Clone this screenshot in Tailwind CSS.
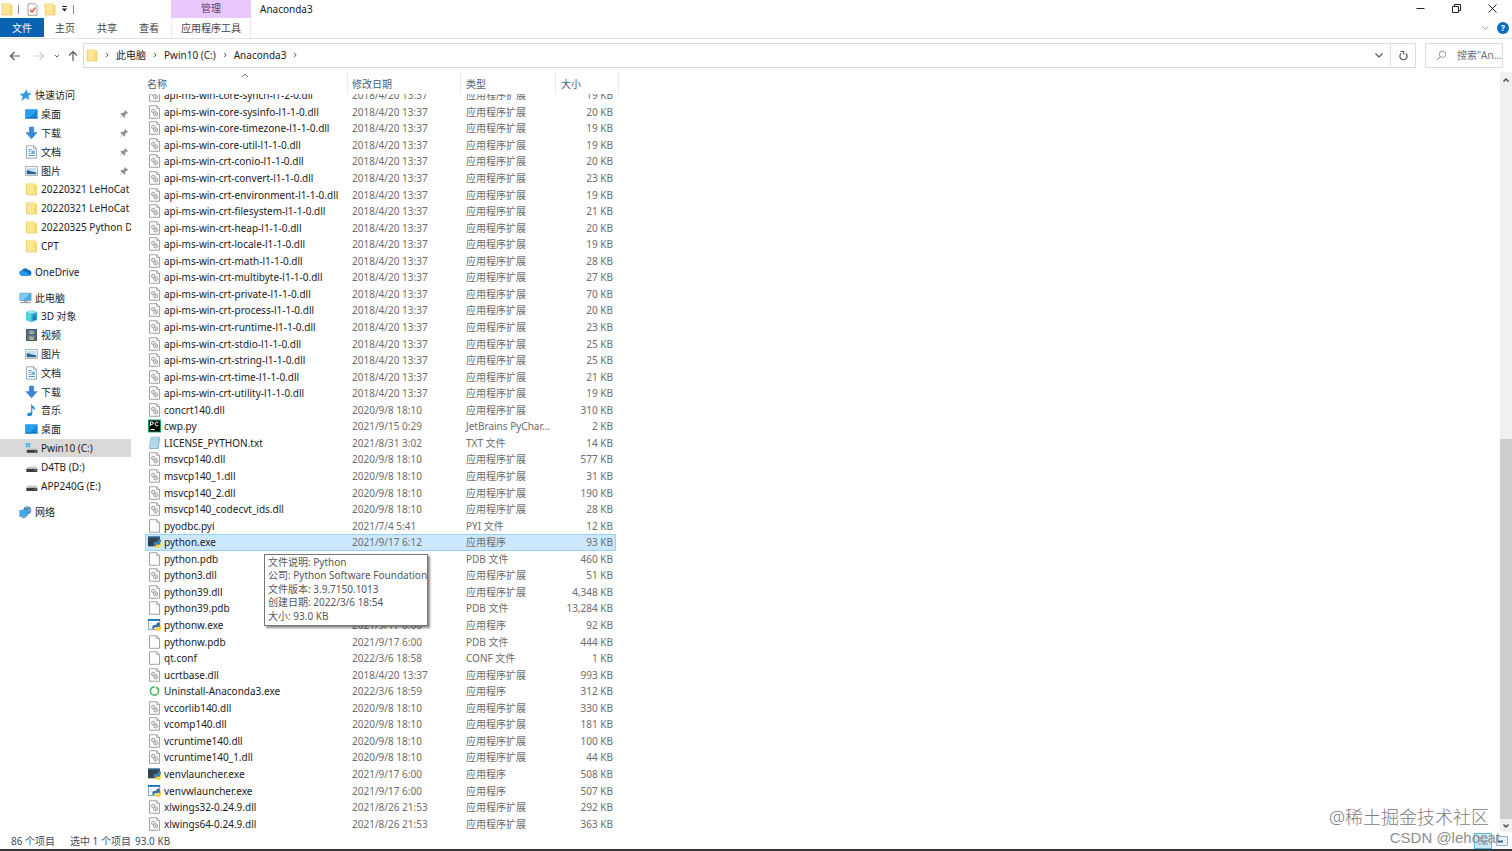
<!DOCTYPE html>
<html lang="zh-CN">

<head>
    <meta charset="UTF-8">
    <meta name="viewport" content="width=device-width, initial-scale=1.0">
    <title>Anaconda3</title>
    <script src="https://cdn.jsdelivr.net/npm/@tailwindcss/browser@4"></script>
</head>

<body class="relative flex h-screen flex-col overflow-hidden bg-white font-['Noto_Sans','Noto_Sans_CJK_SC',sans-serif] text-[10px] leading-4 text-[#1c1c1c]">

    <!-- Icon set -->
    <svg class="hidden">
        <symbol id="folder" viewBox="0 0 12 14">
            <path d="M1 1.5h8.5v1.2H11a.6.6 0 0 1 .6.6V13H1z" fill="#f5d978" />
            <path d="M1 1.5h7.6v11.5H1z" fill="#fde596" />
            <path d="M1 13V1.5M1 13h10.6" stroke="#e8c765" stroke-width=".7" fill="none" />
        </symbol>
        <symbol id="dll" viewBox="0 0 12 14">
            <path d="M1 .7h7.300l2.700 2.700v9.900H1z" fill="#fbfbfb" stroke="#8d8d8d" stroke-width=".8" />
            <path d="M8.200.8v2.800H11" fill="none" stroke="#8d8d8d" stroke-width=".7" />
            <circle cx="4.800" cy="6" r="1.800" fill="#e3e6e8" stroke="#9aa3a9" stroke-width=".9" />
            <circle cx="7.200" cy="8.900" r="2.100" fill="#e3e6e8" stroke="#9aa3a9" stroke-width=".9" />
            <circle cx="7.200" cy="8.900" r=".6" fill="#7f8a91" />
        </symbol>
        <symbol id="file" viewBox="0 0 12 14">
            <path d="M1 .7h7.300l2.700 2.700v9.900H1z" fill="#fefefe" stroke="#8d8d8d" stroke-width=".8" />
            <path d="M8.200.8v2.800H11" fill="none" stroke="#8d8d8d" stroke-width=".7" />
        </symbol>
        <symbol id="txt" viewBox="0 0 12 14">
            <path d="M3 1.500h8.700l-1.600 11.500H1z" fill="#8fc4d8" />
            <path d="M2.500 1h8.300L9.400 12.500H.6z" fill="#b5dcea" stroke="#6aa5bd" stroke-width=".5" />
            <path d="M3.600 3.500h5.200M3.300 5.500h5.200M3 7.500h5.200" stroke="#a0cfe0" stroke-width=".6" />
        </symbol>
        <symbol id="pycharm" viewBox="0 0 12 12">
            <path d="M0 0h12v12H0z" fill="#1fbd72" />
            <path d="M.8.8h10.400v10.400H.8z" fill="#070707" />
            <path d="M2.200 6V2.200h1.500a1.100 1.100 0 0 1 0 2.300H2.300M9.400 2.800a1.700 1.700 0 1 0 0 2.600M2.200 9.300h4" stroke="#fff" stroke-width=".9" fill="none" />
        </symbol>
        <symbol id="python" viewBox="0 0 12 12">
            <path d="M0 1h11v9H0z" fill="#33434c" />
            <path d="M0 1h11v1.400H0z" fill="#1f6593" />
            <path d="M5 7.800C5 5.400 5.800 6 8 5.800c1 0 1-.6 1-1.800 0-1 3-.6 3 .6V6c0 1.600-1 2-2.200 2H8c-1 0-1.400.8-1.400 1.800C5 9.800 5 9 5 7.800z" fill="#3c7fba" />
            <path d="M12 6v3c0 1.700-1 2.600-2.600 2.600-1.800 0-2.600-.6-2.600-1.600 0-1.200.6-1.600 1.600-1.600H10C11.200 8.400 11.400 7.500 11.400 6z" fill="#fcd84e" />
        </symbol>
        <symbol id="pythonw" viewBox="0 0 12 12">
            <path d="M.4.9h10.400v9.200H.4z" fill="#fff" stroke="#5a86ab" stroke-width=".7" />
            <path d="M0 .5h11.200v1.700H0z" fill="#1674bd" />
            <path d="M1.800 4.500h2M1.800 6.500h1.500" stroke="#b5c6d6" stroke-width=".7" />
            <path d="M4 8.200C4 5.800 5.200 6 7.200 5.800c1 0 .8-.8.8-1.600 0-1 3-.6 3 .6V6c0 1.600-1 2-2.200 2H7c-1 0-1.400.8-1.400 1.800C4.200 9.800 4 9 4 8.200z" fill="#3572a5" />
            <path d="M12 6v3c0 1.700-1 2.600-2.600 2.600-1.800 0-2.600-.6-2.600-1.600 0-1.200.6-1.600 1.600-1.600H10C11.200 8.400 11.400 7.500 11.400 6z" fill="#fcd03e" />
        </symbol>
        <symbol id="ring" viewBox="0 0 12 12">
            <circle cx="6" cy="6" r="3.800" fill="none" stroke="#43b649" stroke-width="1.400" stroke-dasharray="22.800 1.100" stroke-dashoffset="5" />
        </symbol>
        <symbol id="star" viewBox="0 0 12 12">
            <path d="M7 .8l1 3.300 3.700.300-3 2.200.9 3.900-3.200-2-4.300 3L3.400 7.300.6 4.900l3.900-.4z" fill="#2f9be6" />
        </symbol>
        <symbol id="desktop" viewBox="0 0 13 12">
            <path d="M.4 1.500h12.200v9H.4z" fill="#1288dc" />
            <path d="M.4 1.500h12.200L5 9.600H.4z" fill="#28a0ef" />
            <path d="M.4 9.500h12.200v1H.4z" fill="#0c6ab5" />
        </symbol>
        <symbol id="download" viewBox="0 0 13 14">
            <path d="M4.300 1h4.400v5.500h3.500L6.500 13 .8 6.500h3.500z" fill="#3a87d3" stroke="#2a6fb8" stroke-width=".4" />
        </symbol>
        <symbol id="document" viewBox="0 0 13 14">
            <path d="M1.500.8h7.300l2.600 2.600v9.800H1.500z" fill="#fbfdff" stroke="#8795a1" stroke-width=".8" />
            <path d="M8.600.8v2.800h2.800" fill="none" stroke="#8795a1" stroke-width=".7" />
            <path d="M3.500 4.500h3M3.500 6.300h2M3.500 8.500h2M3.500 10.500h6.400" stroke="#3d8bce" stroke-width=".9" />
            <path d="M6.300 5.600h3.600v3.400H6.300z" fill="#73b1e2" />
        </symbol>
        <symbol id="picture" viewBox="0 0 13 12">
            <path d="M.5 1.500h12v9H.5z" fill="#fff" stroke="#96a2ab" stroke-width=".8" />
            <path d="M1.700 2.800h9.600v6.400H1.700z" fill="#c3e1f4" />
            <path d="M1.700 5.500c2-1 3 .8 5 1s3 .5 4.600 1v1.700H1.700z" fill="#2f6288" />
        </symbol>
        <symbol id="cloud" viewBox="0 0 14 12">
            <path d="M3.400 10a2.800 2.800 0 0 1-.4-5.600A3.900 3.900 0 0 1 10 3.900 3.100 3.100 0 0 1 11 10z" fill="#0f6cbd" />
            <path d="M3.400 10a2.800 2.800 0 0 1-1-5.300c2-.9 4 .3 8.600 3.800l1.600.8a3 3 0 0 1-1.600.7z" fill="#2a9bea" />
        </symbol>
        <symbol id="pc" viewBox="0 0 14 12">
            <path d="M1 .8h12v8H1z" fill="#48aee8" stroke="#6d8797" stroke-width=".7" />
            <path d="M1.400 1.200h10.500L4 8.400H1.400z" fill="#80cdf4" />
            <path d="M5.500 9h3v1.500h-3z" fill="#9aa9b2" />
            <path d="M1.500 11h11" stroke="#75858f" stroke-width="1" />
        </symbol>
        <symbol id="cube" viewBox="0 0 13 14">
            <path d="M1 3l5.500-2L12 3v8l-5.500 2L1 11z" fill="#24a9c8" />
            <path d="M1 3l5.500-2L12 3 6.500 5z" fill="#a4e9f2" />
            <path d="M1 3l5.500 2v8L1 11z" fill="#5ccfe0" />
            <path d="M8 7l3-.8v4L8 11.200z" fill="#147fa8" />
        </symbol>
        <symbol id="video" viewBox="0 0 13 14">
            <path d="M1 1h11v12H1z" fill="#39424c" />
            <path d="M3.300 1.800h6.400v4.800H3.300z" fill="#588fca" />
            <path d="M3.300 7.400h6.400v4.800H3.300z" fill="#7f97a4" />
            <path d="M4 5.800l2.500-3 2.500 3zM4.500 11.500l2-3 2.200 3z" fill="#e3b64c" />
            <path d="M2.100 1.500v11M10.900 1.500v11" stroke="#c3ccd3" stroke-width=".9" stroke-dasharray="1 1" />
        </symbol>
        <symbol id="music" viewBox="0 0 13 14">
            <path d="M6.200.5c.4 2.200 4.700 3.200 3.600 7.500-.4-1.800-1.500-2.500-2.500-2.700v5.500c0 1.500-1.300 2.500-2.700 2.500S2.200 12.500 2.200 11.400s1.100-2 2.400-2c.6 0 1.100.1 1.600.3z" fill="#1a8ade" />
        </symbol>
        <symbol id="windrive" viewBox="0 0 13 12">
            <path d="M.8 1.200h2v1.800h-2zM3.300 1.200h2v1.800h-2zM.8 3.500h2v1.800h-2zM3.300 3.500h2v1.800h-2z" fill="#25b1ec" />
            <path d="M3 6h8.300l1.200 2H1.800z" fill="#c4c7c9" />
            <path d="M1.800 8h10.700v2.800H1.800z" fill="#3a3d40" />
            <path d="M9.800 9.400h1.500" stroke="#6fdc7c" stroke-width=".8" />
        </symbol>
        <symbol id="drive" viewBox="0 0 13 12">
            <path d="M2.500 5.500h8.500l1.300 2.300H1.300z" fill="#c9cccd" />
            <path d="M1.300 7.800h11v3.200h-11z" fill="#3a3d40" />
            <path d="M9.600 9.200h1.500" stroke="#b5bcc0" stroke-width=".8" />
        </symbol>
        <symbol id="network" viewBox="0 0 14 14">
            <circle cx="9" cy="5" r="4.300" fill="#5b8db5" />
            <path d="M7 2c2-1.500 3.500.5 5-1M9.500 5.500c1-.6 2 .1 3.500-.6" stroke="#b0d6ef" stroke-width=".9" fill="none" />
            <path d="M.8 5.500l8.200-1v6.500l-8.200.8z" fill="#3fadec" stroke="#2f82b8" stroke-width=".6" />
            <path d="M3 13l5-.6M5.500 11.500V13" stroke="#5a7789" stroke-width="1" />
        </symbol>
        <symbol id="pin" viewBox="0 0 10 10">
            <path d="M6 1l3.200 3-1 .5-.6-.1L6 6.200 6.200 8l-.8.800-2-2L1 9.300.8 9l2.300-2.500L1.300 4.700l.8-.7 1.800.1 1.800-1.700L5.500 1.500z" fill="#8b9298" />
        </symbol>
        <symbol id="right" viewBox="0 0 6 8">
            <path d="M2 1.800L4.200 4 2 6.200" fill="none" stroke="#555" stroke-width="1" />
        </symbol>
    </svg>

    <!-- Title bar and ribbon tabs -->
    <header class="grid shrink-0 grid-cols-[171px_80px_1fr] grid-rows-[18px_20px] border-b border-[#e2e3e4]">
        <div class="flex items-center pl-px">
            <svg class="h-[14px] w-3"><use href="#folder" /></svg>
            <span class="ml-[5px] h-[9px] w-px bg-[#8a8a8a]"></span>
            <button class="ml-2" aria-label="属性">
                <svg class="h-[13px] w-[11px]" viewBox="0 0 11 13">
                    <path d="M1 .8h7l2 2v9.500H1z" fill="#fff" stroke="#8b8b8b" stroke-width=".8" />
                    <path d="M3 6.800l2 2.300 3.300-4.600" fill="none" stroke="#e05428" stroke-width="1.400" />
                </svg>
            </button>
            <button class="ml-[6px]" aria-label="新建文件夹"><svg class="h-[14px] w-3"><use href="#folder" /></svg></button>
            <button class="ml-1" aria-label="自定义快速访问工具栏">
                <svg class="h-2 w-[9px]" viewBox="0 0 9 8"><path d="M2 1.500h5" stroke="#222" /><path d="M1.800 3.500h5.400L4.500 6.500z" fill="#222" /></svg>
            </button>
            <span class="ml-1 h-[9px] w-px bg-[#8a8a8a]"></span>
        </div>
        <div class="flex items-center justify-center bg-[#e8c8fc] pb-[3px] text-[#5a3f68]">管理</div>
        <div class="flex items-center justify-between pl-[9px]">
            <h1>Anaconda3</h1>
            <div class="flex items-center gap-[25px] pr-[14px] pb-[2px]">
                <button aria-label="最小化"><svg class="size-[11px]" viewBox="0 0 11 11"><path d="M1.500 5.500h8" stroke="#222" /></svg></button>
                <button aria-label="还原"><svg class="size-[11px]" viewBox="0 0 11 11"><path d="M1.500 3.500h6v6h-6zM3.500 3.500v-2h6v6h-2" fill="none" stroke="#222" /></svg></button>
                <button aria-label="关闭"><svg class="size-[11px]" viewBox="0 0 11 11"><path d="M1.500 1.500l8 8M9.500 1.500l-8 8" stroke="#222" /></svg></button>
            </div>
        </div>
        <nav class="flex text-[#444]">
            <button class="h-[19px] w-11 bg-[#0a62b3] text-white">文件</button>
            <button class="h-5 w-[42px]">主页</button>
            <button class="h-5 w-[42px]">共享</button>
            <button class="h-5 w-[42px]">查看</button>
        </nav>
        <button class="border-x border-[#eee4f4] text-[#444]">应用程序工具</button>
        <div class="flex items-center justify-end gap-[7px] pr-[3px]">
            <button aria-label="展开功能区"><svg class="h-2 w-[9px]" viewBox="0 0 9 8"><path d="M1.500 2.500l3 3 3-3" fill="none" stroke="#aaa" /></svg></button>
            <button class="size-3 rounded-full bg-[#0a6cc4] text-[9px] leading-3 font-bold text-white">?</button>
        </div>
    </header>

    <!-- Address bar -->
    <div class="flex h-[33px] shrink-0 items-center pr-[9px]">
        <div class="flex w-[83px] items-center pl-[9px]">
            <button aria-label="后退"><svg class="size-3" viewBox="0 0 12 12"><path d="M11 6H1.500M5.500 2l-4 4 4 4" fill="none" stroke="#555" stroke-width="1.200" /></svg></button>
            <button class="ml-3" aria-label="前进"><svg class="size-3" viewBox="0 0 12 12"><path d="M1 6h9.500M6.500 2l4 4-4 4" fill="none" stroke="#d0d0d0" stroke-width="1.100" /></svg></button>
            <button class="ml-2" aria-label="最近的位置"><svg class="h-2 w-2" viewBox="0 0 8 8"><path d="M2 3l2 2 2-2" fill="none" stroke="#666" /></svg></button>
            <button class="ml-[6px]" aria-label="向上"><svg class="size-3" viewBox="0 0 12 12"><path d="M6 11V1.500M2 5.500l4-4 4 4" fill="none" stroke="#555" stroke-width="1.200" /></svg></button>
        </div>
        <div class="flex h-[25px] flex-1 items-center border border-[#dcdcdc] pb-px pl-[2px]">
            <svg class="h-[14px] w-3"><use href="#folder" /></svg>
            <svg class="mx-[6px] h-2 w-[6px]"><use href="#right" /></svg>
            <a href="#">此电脑</a>
            <svg class="mx-[6px] h-2 w-[6px]"><use href="#right" /></svg>
            <a href="#">Pwin10 (C:)</a>
            <svg class="mx-[6px] h-2 w-[6px]"><use href="#right" /></svg>
            <a href="#">Anaconda3</a>
            <svg class="mx-[6px] h-2 w-[6px]"><use href="#right" /></svg>
            <button class="ml-auto px-[6px]" aria-label="以前的位置"><svg class="h-3 w-[10px]" viewBox="0 0 10 12"><path d="M1.500 4.500L5 8l3.500-3.500" fill="none" stroke="#555" stroke-width="1.200" /></svg></button>
            <button class="flex h-full w-[25px] items-center justify-center border-l border-[#dcdcdc]" aria-label="刷新">
                <svg class="size-[11px]" viewBox="0 0 11 11"><path d="M3.200 3.400a3.600 3.600 0 1 0 4.600 0" fill="none" stroke="#555" stroke-width="1.200" /><path d="M2.500 1.500h3.200v3" fill="none" stroke="#555" stroke-width="1.100" /></svg>
            </button>
        </div>
        <label class="ml-[9px] flex h-[25px] w-[78px] items-center border border-[#dcdcdc] pb-px pl-[10px]">
            <svg class="size-[11px] shrink-0" viewBox="0 0 11 11"><circle cx="6.500" cy="4.300" r="3.200" fill="none" stroke="#888" stroke-width=".9" /><path d="M4.200 6.600L1 10" stroke="#888" /></svg>
            <input type="text" aria-label="搜索" placeholder='搜索"An...' class="ml-[10px] w-full min-w-0 outline-none placeholder:text-[#6d6d6d]">
        </label>
    </div>

    <main class="flex min-h-0 flex-1">
        <!-- Navigation pane -->
        <nav class="w-[145px] shrink-0 pt-[14px]">
            <div id="places" class="flex h-[435px] w-[131px] flex-col gap-[7px]"></div>
        </nav>

        <!-- File list -->
        <section class="relative min-w-0 flex-1 overflow-hidden">
            <table class="flex h-full w-[474px] flex-col">
                <thead class="relative z-10 block h-[22px] shrink-0 bg-white text-[#4c607a]">
                    <tr class="grid h-full grid-cols-[203px_113px_95px_63px] text-left">
                        <th class="relative border-r border-[#e8e8e8] pt-1 pl-[2px] font-normal">名称
                            <svg class="absolute top-px left-[96px] h-[5px] w-2" viewBox="0 0 8 5"><path d="M1 4l3-3 3 3" fill="none" stroke="#777" /></svg>
                        </th>
                        <th class="border-r border-[#e8e8e8] pt-1 pl-1 font-normal">修改日期</th>
                        <th class="border-r border-[#e8e8e8] pt-1 pl-[5px] font-normal">类型</th>
                        <th class="border-r border-[#e8e8e8] pt-1 pl-[5px] font-normal">大小</th>
                    </tr>
                </thead>
                <tbody id="files" class="-mt-[7px] grid min-h-0 flex-1 auto-rows-fr"></tbody>
            </table>

            <!-- Tooltip of the selected file -->
            <div role="tooltip" class="absolute top-[482px] left-[119px] z-20 w-[164px] border border-[#777] bg-white px-[3px] pb-[2px] text-[#575757] shadow-[2px_2px_2px_rgba(0,0,0,0.45)]">
                <p class="h-[14px] leading-[14px]">文件说明: Python</p>
                <p class="h-[13px] leading-[13px] whitespace-nowrap">公司: Python Software Foundation</p>
                <p class="h-[14px] leading-[14px]">文件版本: 3.9.7150.1013</p>
                <p class="h-[13px] leading-[13px]">创建日期: 2022/3/6 18:54</p>
                <p class="h-[14px] leading-[14px]">大小: 93.0 KB</p>
            </div>
        </section>

        <!-- Scrollbar -->
        <div class="flex w-3 shrink-0 flex-col bg-[#f0f0f0]">
            <button class="flex h-[16px] items-center justify-center" aria-label="向上滚动"><svg class="size-2" viewBox="0 0 8 8"><path d="M1.500 5.500L4 3l2.500 2.500" fill="none" stroke="#444" stroke-width="1.400" /></svg></button>
            <div class="flex flex-1 flex-col justify-end"><div class="h-[52%] bg-[#cdcdcd]"></div></div>
            <button class="flex h-[13px] items-center justify-center" aria-label="向下滚动"><svg class="size-2" viewBox="0 0 8 8"><path d="M1.500 2.500L4 5l2.500-2.500" fill="none" stroke="#444" stroke-width="1.400" /></svg></button>
        </div>
    </main>

    <!-- Status bar -->
    <footer class="flex h-[19px] shrink-0 items-center border-b-2 border-[#3a3638] pr-1 pl-[11px] text-[#3c4c66]">
        <span class="w-[59px]">86 个项目</span>
        <span class="w-[65px] whitespace-nowrap">选中 1 个项目</span>
        <span>93.0 KB</span>
        <div class="ml-auto flex items-center">
            <button class="flex h-4 w-[18px] items-center justify-center border border-[#5fb9e0] bg-[#cbeaf8]" aria-label="详细信息"><svg class="size-[10px]" viewBox="0 0 10 10"><path d="M0 2h3M4 2h6M0 5h3M4 5h6M0 8h3M4 8h6" stroke="#6d8ea5" /></svg></button>
            <button class="ml-1" aria-label="大图标"><svg class="h-[10px] w-3" viewBox="0 0 12 10"><path d="M.5.500h11v9H.5z" fill="#e6f1fa" stroke="#8fb2d0" /><path d="M2 5.500h5" stroke="#35648e" stroke-width="2" /></svg></button>
        </div>
    </footer>

    <!-- Watermarks -->
    <p class="absolute right-[23px] bottom-5 z-30 text-lg leading-7 font-light text-[#808080]">@稀土掘金技术社区</p>
    <p class="absolute right-3 bottom-[3px] z-30 font-['Liberation_Sans',sans-serif] text-[15px] leading-5 text-[#8e8e8e]">CSDN @lehocat</p>

    <script>
        // Groups of the navigation pane: icon, label, indent level, flag
        const quick = [
            ['star', '快速访问', 0], ['desktop', '桌面', 1, 'pin'], ['download', '下载', 1, 'pin'],
            ['document', '文档', 1, 'pin'], ['picture', '图片', 1, 'pin'], ['folder', '20220321 LeHoCat', 1],
            ['folder', '20220321 LeHoCat', 1], ['folder', '20220325 Python Dj', 1], ['folder', 'CPT', 1],
        ];
        const computer = [
            ['pc', '此电脑', 0], ['cube', '3D 对象', 1], ['video', '视频', 1], ['picture', '图片', 1],
            ['document', '文档', 1], ['download', '下载', 1], ['music', '音乐', 1], ['desktop', '桌面', 1],
            ['windrive', 'Pwin10 (C:)', 1, 'active'], ['drive', 'D4TB (D:)', 1], ['drive', 'APP240G (E:)', 1],
        ];
        const groups = [
            ['flex-[9]', quick],
            ['flex-[1]', [['cloud', 'OneDrive', 0]]],
            ['flex-[11]', computer],
            ['flex-[1]', [['network', '网络', 0]]],
        ];

        document.getElementById('places').innerHTML = groups.map(([grow, items]) => `
            <ul class="flex flex-col ${grow}">
                ${items.map(([icon, label, level, flag]) => `
                    <li class="flex min-h-0 flex-1 ${flag === 'active' ? 'bg-[#d9d9d9]' : ''}">
                        <a href="#" class="flex min-w-0 flex-1 items-center ${level ? 'pl-[25px]' : 'pl-[19px]'}">
                            <svg class="h-[14px] w-[13px] shrink-0"><use href="#${icon}" /></svg>
                            <span class="ml-[3px] flex-1 overflow-hidden whitespace-nowrap">${label}</span>
                            ${flag === 'pin' ? '<svg class="mr-[2px] size-[10px] shrink-0"><use href="#pin" /></svg>' : ''}
                        </a>
                    </li>`).join('')}
            </ul>`).join('');

        const types = {
            dll: '应用程序扩展', exe: '应用程序', py: 'JetBrains PyChar...', txt: 'TXT 文件',
            pyi: 'PYI 文件', pdb: 'PDB 文件', conf: 'CONF 文件',
        };
        const icons = { dll: 'dll', py: 'pycharm', txt: 'txt' };

        // name | date | size in KB | icon, when it is not the one of the type
        const files = `api-ms-win-core-synch-l1-2-0.dll|2018/4/20 13:37|19
api-ms-win-core-sysinfo-l1-1-0.dll|2018/4/20 13:37|20
api-ms-win-core-timezone-l1-1-0.dll|2018/4/20 13:37|19
api-ms-win-core-util-l1-1-0.dll|2018/4/20 13:37|19
api-ms-win-crt-conio-l1-1-0.dll|2018/4/20 13:37|20
api-ms-win-crt-convert-l1-1-0.dll|2018/4/20 13:37|23
api-ms-win-crt-environment-l1-1-0.dll|2018/4/20 13:37|19
api-ms-win-crt-filesystem-l1-1-0.dll|2018/4/20 13:37|21
api-ms-win-crt-heap-l1-1-0.dll|2018/4/20 13:37|20
api-ms-win-crt-locale-l1-1-0.dll|2018/4/20 13:37|19
api-ms-win-crt-math-l1-1-0.dll|2018/4/20 13:37|28
api-ms-win-crt-multibyte-l1-1-0.dll|2018/4/20 13:37|27
api-ms-win-crt-private-l1-1-0.dll|2018/4/20 13:37|70
api-ms-win-crt-process-l1-1-0.dll|2018/4/20 13:37|20
api-ms-win-crt-runtime-l1-1-0.dll|2018/4/20 13:37|23
api-ms-win-crt-stdio-l1-1-0.dll|2018/4/20 13:37|25
api-ms-win-crt-string-l1-1-0.dll|2018/4/20 13:37|25
api-ms-win-crt-time-l1-1-0.dll|2018/4/20 13:37|21
api-ms-win-crt-utility-l1-1-0.dll|2018/4/20 13:37|19
concrt140.dll|2020/9/8 18:10|310
cwp.py|2021/9/15 0:29|2
LICENSE_PYTHON.txt|2021/8/31 3:02|14
msvcp140.dll|2020/9/8 18:10|577
msvcp140_1.dll|2020/9/8 18:10|31
msvcp140_2.dll|2020/9/8 18:10|190
msvcp140_codecvt_ids.dll|2020/9/8 18:10|28
pyodbc.pyi|2021/7/4 5:41|12
python.exe|2021/9/17 6:12|93|python
python.pdb|2021/9/17 6:12|460
python3.dll|2021/9/17 6:00|51
python39.dll|2021/9/17 6:00|4,348
python39.pdb|2021/9/17 6:00|13,284
pythonw.exe|2021/9/17 6:00|92|pythonw
pythonw.pdb|2021/9/17 6:00|444
qt.conf|2022/3/6 18:58|1
ucrtbase.dll|2018/4/20 13:37|993
Uninstall-Anaconda3.exe|2022/3/6 18:59|312|ring
vccorlib140.dll|2020/9/8 18:10|330
vcomp140.dll|2020/9/8 18:10|181
vcruntime140.dll|2020/9/8 18:10|100
vcruntime140_1.dll|2020/9/8 18:10|44
venvlauncher.exe|2021/9/17 6:00|508|python
venvwlauncher.exe|2021/9/17 6:00|507|pythonw
xlwings32-0.24.9.dll|2021/8/26 21:53|292
xlwings64-0.24.9.dll|2021/8/26 21:53|363`.split('\n').map(line => line.split('|'));

        document.getElementById('files').innerHTML = files.map(([name, date, size, icon]) => {
            const ext = name.split('.').pop();
            const selected = name === 'python.exe' ? 'bg-[#cce8ff] outline outline-[#99d1ff] -outline-offset-1' : '';
            return `
                <tr class="grid min-h-0 w-[471px] grid-cols-[207px_114px_86px_61px] items-center text-[#6d6d6d] ${selected}">
                    <td class="flex items-center gap-[3px] pl-[3px] text-[#1c1c1c]">
                        <svg class="h-[14px] w-[13px] shrink-0"><use href="#${icon || icons[ext] || 'file'}" /></svg>${name}
                    </td>
                    <td>${date}</td>
                    <td class="whitespace-nowrap">${types[ext]}</td>
                    <td class="text-right whitespace-nowrap">${size} KB</td>
                </tr>`;
        }).join('');
    </script>

</body>

</html>
